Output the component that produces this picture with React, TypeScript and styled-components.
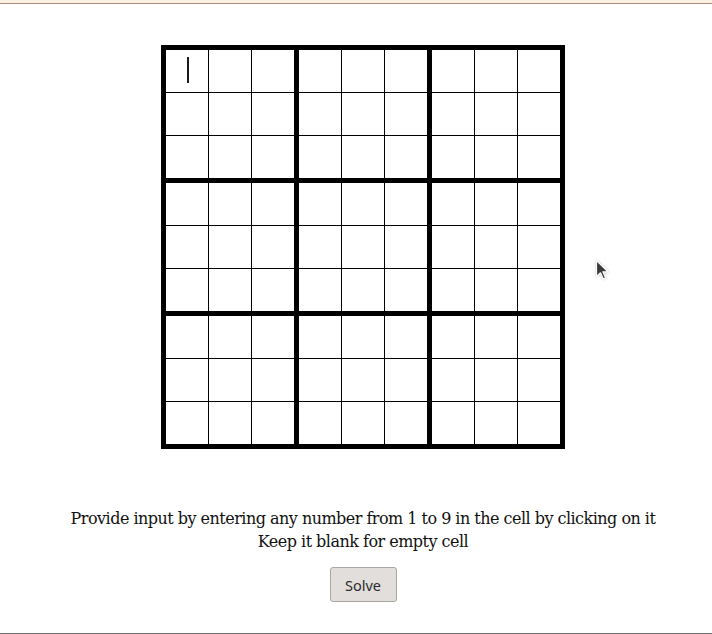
import React from "react";
import styled, { createGlobalStyle } from "styled-components";

const Global = createGlobalStyle`
  html, body { margin: 0; padding: 0; background: #fff; }
  body { overflow: hidden; }
`;

const Page = styled.div`
  position: relative;
  box-sizing: border-box;
  height: 634px;
  display: flex;
  flex-direction: column;
  border-bottom: 1px solid #6f6f6f;
`;

const TopBand = styled.div`
  height: 3px;
  background: #fdf1e6;
  border-bottom: 1px solid #a58c7c;
`;

const Content = styled.main`
  display: flex;
  flex-direction: column;
  align-items: center;
  padding: 41px 0 0 14px;
`;

const Board = styled.div`
  position: relative;
  display: grid;
  grid-template-columns: repeat(3, auto);
  gap: 5px;
  padding: 5px;
  background: #000;
`;

const Box = styled.div`
  display: grid;
  grid-template-columns: repeat(3, 42px);
  gap: 1px;
  background: #000;
`;

const Cell = styled.input`
  box-sizing: border-box;
  width: 42px;
  height: 42px;
  border: none;
  padding: 0;
  margin: 0;
  background: #fff;
  text-align: center;
  font-family: "DejaVu Sans", sans-serif;
  font-size: 22px;
  caret-color: transparent;
  outline: none;
`;

const Caret = styled.span`
  position: absolute;
  left: 26px;
  top: 12px;
  width: 2px;
  height: 26px;
  background: #1a1a1a;
  pointer-events: none;
`;

const Instructions = styled.p`
  margin: 58px 0 0;
  font-family: "DejaVu Serif", serif;
  font-size: 16px;
  letter-spacing: -0.52px;
  line-height: 23px;
  color: #111;
  text-align: center;
`;

const SolveButton = styled.button`
  margin-top: 14px;
  width: 67px;
  height: 35px;
  box-sizing: border-box;
  background: #e1dedb;
  border: 1px solid #aaa6a2;
  border-radius: 3px;
  font-family: "Noto Sans", "Open Sans", sans-serif;
  font-size: 14.5px;
  color: #2b2b2b;
  padding: 0;
  cursor: default;
`;

const Pointer = styled.svg`
  position: absolute;
  left: 595px;
  top: 259px;
  width: 16px;
  height: 22px;
  filter: drop-shadow(0 0 1px rgba(0, 0, 0, 0.25));
`;

export default function App() {
  const boxes = Array.from({ length: 9 }, (_, b) => b);
  return (
    <Page>
      <Global />
      <TopBand />
      <Content>
        <Board>
          {boxes.map((b) => (
            <Box key={b}>
              {Array.from({ length: 9 }, (_, c) => (
                <Cell
                  key={c}
                  type="text"
                  maxLength={1}
                  autoFocus={b === 0 && c === 0}
                  aria-label={`cell ${b}-${c}`}
                />
              ))}
            </Box>
          ))}
          <Caret />
        </Board>
        <Instructions>
          Provide input by entering any number from 1 to 9 in the cell by clicking on it
          <br />
          Keep it blank for empty cell
        </Instructions>
        <SolveButton>Solve</SolveButton>
      </Content>
      <Pointer viewBox="0 0 16 22">
        <path
          d="M1.5 1.5 V17.5 L5.5 13.8 L8.3 20 L10.6 19 L7.9 12.8 H13 Z"
          fill="#3a3a3a"
          stroke="#fff"
          strokeWidth="1.2"
          strokeLinejoin="round"
        />
      </Pointer>
    </Page>
  );
}
